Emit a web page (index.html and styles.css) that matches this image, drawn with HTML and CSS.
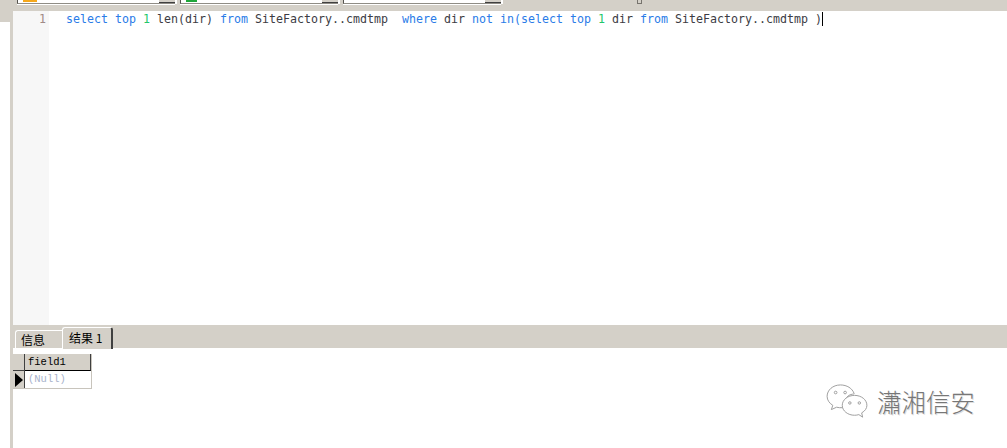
FILE: index.html
```html
<!DOCTYPE html>
<html lang="zh">
<head>
<meta charset="utf-8">
<title>Query</title>
<link rel="stylesheet" href="styles.css">
</head>
<body>
<div class="toolbar">
  <div class="combo combo-a"><span class="combo-icon icon-orange"></span><span class="combo-btn"></span></div>
  <div class="combo combo-b"><span class="combo-icon icon-green"></span><span class="combo-btn"></span></div>
  <div class="combo combo-c"><span class="combo-btn"></span></div>
  <span class="tool-stub"></span>
</div>
<div class="main">
  <div class="side"><div class="side-top"></div></div>
  <div class="work">
    <div class="editor">
      <div class="gutter">1</div>
      <div class="code"><span class="kw">select</span> <span class="kw">top</span> <span class="num">1</span> len(dir) <span class="kw">from</span> SiteFactory..cmdtmp  <span class="kw">where</span> dir <span class="kw">not</span> <span class="kw">in(select</span> <span class="kw">top</span> <span class="num">1</span> dir <span class="kw">from</span> SiteFactory..cmdtmp )<span class="caret"></span></div>
    </div>
    <div class="tabs">
      <div class="tab tab-info">信息</div>
      <div class="tab tab-result">结果 1</div>
    </div>
    <div class="results">
      <div class="grid">
        <div class="corner"></div>
        <div class="head">field1</div>
        <div class="marker"><svg class="arrow" width="8" height="14" viewBox="0 0 8 14"><path d="M0 0L8 7L0 14Z"/></svg></div>
        <div class="cell">(Null)</div>
      </div>
      <div class="mark">
        <svg class="wechat" width="42" height="36" viewBox="0 0 44 38" fill="#fff" stroke="#9a9a9a" stroke-width="1">
          <path d="M15 1C7 1 1 6.500 1 13C1 17 3.500 20.500 7 22.500L5.500 27L11 24.500C13 25 15 25.200 17 25C20 25 16 18 24 12C28 10 30 11 29.500 10C27.500 4.500 22 1 15 1Z"/>
          <circle cx="10" cy="9" r="1.400"/>
          <circle cx="20" cy="9" r="1.400"/>
          <path d="M30 12C23 12 17 16.500 17 22.500C17 28.500 23 33 30 33C31.500 33 33 32.800 34.500 32.300L38.500 35L37.500 30.500C41 28.500 43 25.700 43 22.500C43 16.500 37 12 30 12Z"/>
          <circle cx="25" cy="20" r="1.300"/>
          <circle cx="35" cy="20" r="1.300"/>
        </svg>
        <span class="mark-text">瀟湘信安</span>
      </div>
    </div>
  </div>
</div>
</body>
</html>
```

FILE: styles.css
```css
html, body {
  margin: 0;
  padding: 0;
}

body {
  width: 1007px;
  height: 448px;
  overflow: hidden;
  background: #fff;
  display: flex;
  flex-direction: column;
  font-family: "Noto Sans CJK SC", "Liberation Sans", sans-serif;
}

.toolbar {
  height: 11px;
  flex: none;
  background: #d4d0c8;
  display: flex;
  align-items: flex-start;
  gap: 5px;
  padding-left: 17px;
  box-sizing: border-box;
}

.combo {
  height: 4px;
  box-sizing: border-box;
  background: #fff;
  border-left: 1px solid #55534e;
  border-bottom: 1px solid #8f8c85;
  box-shadow: 2px 0 0 #fff, 0 1px 0 #fff;
  display: flex;
  align-items: flex-start;
  justify-content: space-between;
}

.combo-a { width: 158px; }
.combo-b { width: 158px; }
.combo-c { width: 158px; margin-left: 0; }

.combo-icon {
  width: 14px;
  height: 2px;
  margin-left: 5px;
}

.icon-orange { background: #f5a81c; }
.icon-green { background: #1fa63a; width: 11px; }

.combo-btn {
  width: 16px;
  height: 3px;
  background: #d4d0c8;
  border-bottom: 1px solid #404040;
  box-sizing: border-box;
  margin-left: auto;
}

.tool-stub {
  width: 5px;
  height: 4px;
  box-sizing: border-box;
  margin-left: 131px;
  border: 1px solid #77746e;
  border-top: 0;
}

.main {
  flex: 1;
  display: flex;
  min-height: 0;
}

.side {
  width: 13px;
  flex: none;
  box-sizing: border-box;
  border-right: 3px solid #d4d0c8;
  background: #fff;
}

.side-top {
  height: 11px;
  background: #d4d0c8;
}

.work {
  flex: 1;
  min-width: 0;
  display: flex;
  flex-direction: column;
}

.editor {
  height: 314px;
  flex: none;
  display: flex;
  background: #fff;
}

.gutter {
  width: 36px;
  flex: none;
  box-sizing: border-box;
  background: #f7f7f7;
  color: #a08a86;
  text-align: right;
  padding: 1px 3px 0 0;
  font: 11.63px/15px "DejaVu Sans Mono", monospace;
}

.code {
  padding: 1px 0 0 17px;
  color: #3c3c44;
  font: 11.63px/15px "DejaVu Sans Mono", monospace;
  white-space: pre;
}

.kw { color: #2a7ce8; }
.num { color: #22c76a; }

.caret {
  display: inline-block;
  width: 1px;
  height: 14px;
  background: #000;
  vertical-align: top;
}

.tabs {
  height: 23px;
  flex: none;
  box-sizing: border-box;
  background: #d4d0c8;
  display: flex;
  align-items: flex-end;
  padding-left: 2px;
}

.tab {
  box-sizing: border-box;
  font-size: 12px;
  color: #000;
  border-left: 1px solid #fff;
  border-top: 1px solid #fff;
}

.tab-info {
  width: 47px;
  height: 18px;
  line-height: 18px;
  padding-left: 5px;
  border-top-left-radius: 3px;
}

.tab-result {
  width: 51px;
  height: 22px;
  line-height: 19px;
  padding-left: 6px;
  margin-bottom: -1px;
  background: #d4d0c8;
  border-right: 2px solid #404040;
  border-top-left-radius: 3px;
  border-top-right-radius: 3px;
  position: relative;
}

.results {
  flex: 1;
  min-height: 0;
  display: flex;
  justify-content: space-between;
  align-items: flex-start;
  background: #fff;
}

.grid {
  margin-top: 6px;
  display: grid;
  grid-template-columns: 12px 66px;
  grid-template-rows: 17px 17px;
  border-right: 1px solid #c8c4bc;
  border-bottom: 1px solid #c8c4bc;
  box-sizing: content-box;
  font: 10.5px/16px "Liberation Mono", monospace;
}

.corner, .marker {
  background: #d4d0c8;
  border-right: 1px solid #404040;
  border-bottom: 1px solid #404040;
  box-sizing: border-box;
}

.marker {
  border-bottom: 0;
  display: flex;
  align-items: center;
  justify-content: center;
}

.arrow { fill: #000; }

.head {
  background: #d4d0c8;
  border-bottom: 1px solid #000;
  border-right: 1px solid #404040;
  padding-left: 3px;
  color: #000;
  box-sizing: border-box;
}

.cell {
  padding-left: 3px;
  color: #a9b3cc;
}

.mark {
  margin: 36px 32px 0 0;
  display: flex;
  align-items: center;
  gap: 9px;
}

.mark-text {
  font-size: 24.5px;
  font-weight: 300;
  line-height: 30px;
  color: #777;
  text-shadow: 1px 1px 0 #ddd;
}
```
